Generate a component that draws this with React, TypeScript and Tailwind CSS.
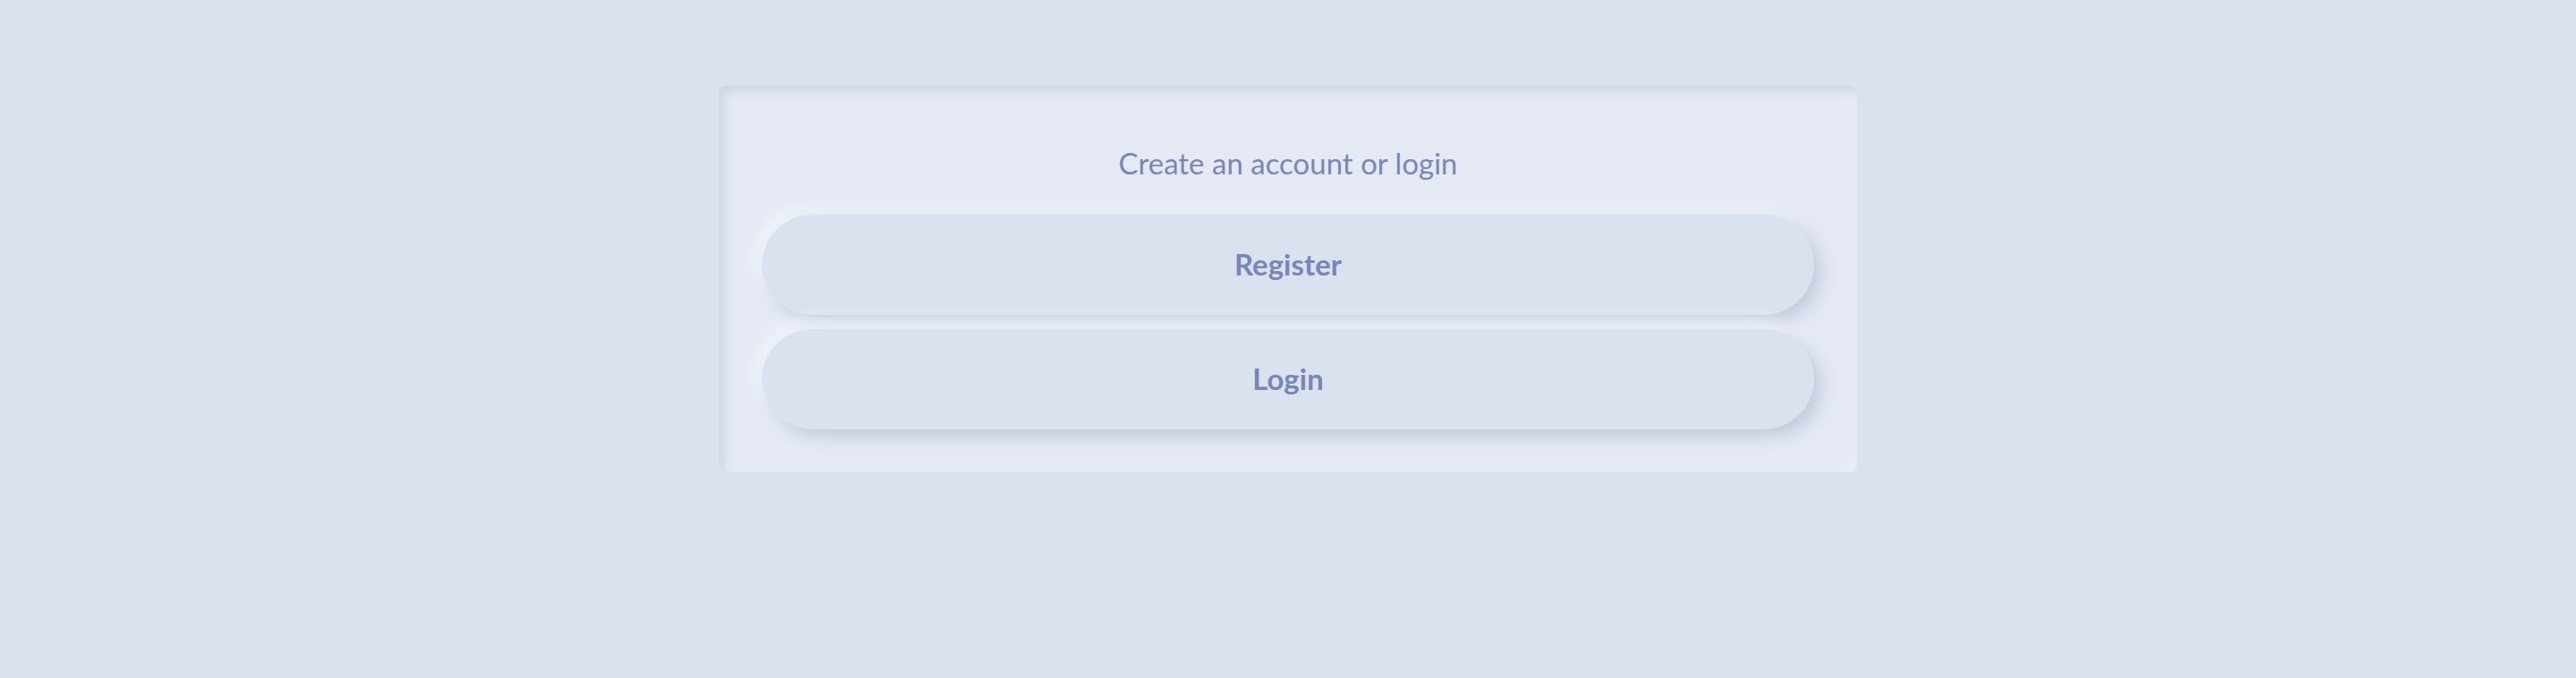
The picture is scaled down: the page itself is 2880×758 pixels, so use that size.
export default function App() {
  return (
    <div className="flex min-h-[758px] w-full justify-center bg-[#dbe2ef] pt-[96px] font-['Lato','Noto_Sans',sans-serif]">
      <div className="flex h-[432px] w-[1272px] flex-col rounded-[8px] bg-[#e4e9f4] px-[48px] pt-[62px] shadow-[inset_5px_5px_12px_#ccd3e2,inset_-3px_-3px_8px_#eef2f9]">
        <p className="mb-[34px] text-center text-[33px] leading-[48px] text-[#7a86b6]">
          Create an account or login
        </p>
        <div className="flex flex-col gap-[16px]">
          <button className="h-[112px] w-full rounded-full bg-[#dbe2ef] text-[33px] font-bold text-[#7a86b6] shadow-[8px_8px_18px_#c3cbdc,-8px_-8px_18px_#f1f4fa]">
            Register
          </button>
          <button className="h-[112px] w-full rounded-full bg-[#dbe2ef] text-[33px] font-bold text-[#7a86b6] shadow-[8px_8px_18px_#c3cbdc,-8px_-8px_18px_#f1f4fa]">
            Login
          </button>
        </div>
      </div>
    </div>
  );
}
